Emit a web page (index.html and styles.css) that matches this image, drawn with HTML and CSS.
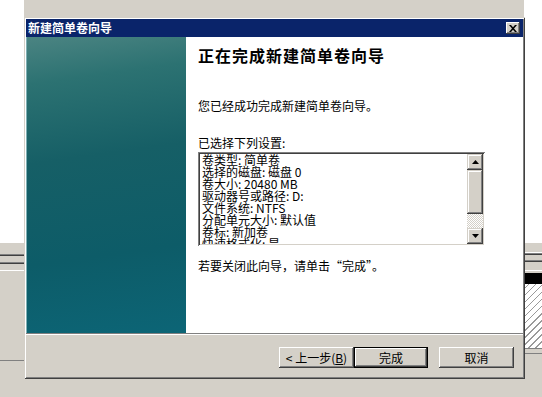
FILE: index.html
```html
<!DOCTYPE html>
<html lang="zh-CN">
<head>
    <meta charset="UTF-8">
    <title>新建简单卷向导</title>
    <link rel="stylesheet" href="styles.css">
</head>
<body>
    <div class="desktop">
        <!-- window behind the wizard -->
        <div class="backdrop">
            <div class="strip">
                <div class="s-white"></div>
                <div class="s-gray h11"></div>
                <div class="s-mid"></div>
                <div class="s-dark"></div>
                <div class="s-gray h6"></div>
                <div class="s-mid"></div>
                <div class="s-dark"></div>
                <div class="s-gray h6"></div>
                <div class="s-light"></div>
                <div class="s-gray h89"></div>
                <div class="s-mid"></div>
                <div class="s-gray fill"></div>
            </div>
            <div class="strip middle"></div>
            <div class="strip">
                <div class="s-white"></div>
                <div class="s-gray h9"></div>
                <div class="s-light"></div>
                <div class="s-mid"></div>
                <div class="s-dark"></div>
                <div class="s-gray h5"></div>
                <div class="s-mid"></div>
                <div class="s-dark"></div>
                <div class="s-gray h8"></div>
                <div class="s-light"></div>
                <div class="s-gray h2"></div>
                <div class="s-black"></div>
                <div class="s-hatch"></div>
                <div class="s-mid"></div>
                <div class="s-gray h4"></div>
                <div class="s-mid"></div>
                <div class="s-gray fill"></div>
            </div>
        </div>

        <div class="dialog">
            <div class="titlebar">
                <span class="title">新建简单卷向导</span>
                <span class="close-btn">
                    <svg width="8" height="7" viewBox="0 0 8 7">
                        <path d="M0 0h2l2 2.2L6 0h2L5 3.5 8 7H6L4 4.8 2 7H0l3-3.5z" fill="#000"/>
                    </svg>
                </span>
            </div>
            <div class="body">
                <div class="banner"></div>
                <div class="content">
                    <h1>正在完成新建简单卷向导</h1>
                    <p class="done">您已经成功完成新建简单卷向导。</p>
                    <p class="label">已选择下列设置:</p>
                    <div class="listbox">
                        <div class="list-text">
                            <div>卷类型: 简单卷</div>
                            <div>选择的磁盘: 磁盘 0</div>
                            <div>卷大小: 20480 MB</div>
                            <div>驱动器号或路径: D:</div>
                            <div>文件系统: NTFS</div>
                            <div>分配单元大小: 默认值</div>
                            <div>卷标: 新加卷</div>
                            <div>快速格式化: 是</div>
                        </div>
                        <div class="scrollbar">
                            <div class="sb-btn">
                                <svg width="7" height="4" viewBox="0 0 7 4"><path d="M3.5 0L7 4H0z" fill="#000"/></svg>
                            </div>
                            <div class="sb-thumb"></div>
                            <div class="sb-track"></div>
                            <div class="sb-btn">
                                <svg width="7" height="4" viewBox="0 0 7 4"><path d="M0 0h7L3.5 4z" fill="#000"/></svg>
                            </div>
                        </div>
                    </div>
                    <p class="hint">若要关闭此向导，请单击“完成”。</p>
                </div>
            </div>
            <div class="footer">
                <button class="btn">&lt; 上一步(<u>B</u>)</button>
                <button class="btn default">完成</button>
                <button class="btn cancel">取消</button>
            </div>
        </div>
    </div>
</body>
</html>
```

FILE: styles.css
```css
body {
    margin: 0;
    background-color: #fff;
    font-family: "Noto Sans CJK SC", "Liberation Sans", sans-serif;
    font-size: 12px;
    color: #000;
}
.desktop {
    position: relative;
    width: 542px;
    height: 397px;
    overflow: hidden;
}

/* background window */
.backdrop {
    display: grid;
    grid-template-columns: 24px 1fr 18px;
    height: 397px;
}
.strip {
    display: flex;
    flex-direction: column;
}
.strip.middle {
    background-color: #d4d0c8;
}
.s-white { height: 243px; background-color: #fff; }
.s-gray { background-color: #d4d0c8; }
.s-gray.h2 { height: 2px; }
.s-gray.h4 { height: 4px; }
.s-gray.h5 { height: 5px; }
.s-gray.h6 { height: 6px; }
.s-gray.h8 { height: 8px; }
.s-gray.h9 { height: 9px; }
.s-gray.h11 { height: 11px; }
.s-gray.h89 { height: 89px; }
.s-gray.fill { flex: 1; }
.s-mid { height: 1px; background-color: #808080; }
.s-dark { height: 1px; background-color: #404040; }
.s-light { height: 1px; background-color: #fff; }
.s-black { height: 11px; background-color: #000; }
.s-hatch {
    height: 64px;
    background: #fff repeating-linear-gradient(-45deg, #fff 0 4px, #9a9a9a 4px 5px);
}

/* wizard dialog */
.dialog {
    position: absolute;
    left: 24px;
    top: 17px;
    width: 501px;
    height: 362px;
    box-sizing: border-box;
    padding: 2px;
    display: flex;
    flex-direction: column;
    background-color: #d4d0c8;
    box-shadow: inset 1px 1px #d4d0c8, inset -1px -1px #404040, inset 2px 2px #fff, inset -2px -2px #808080;
}
.titlebar {
    height: 18px;
    display: flex;
    align-items: center;
    justify-content: space-between;
    background-color: #0a246a;
    padding-left: 2px;
}
.title {
    color: #fff;
    font-weight: bold;
    font-size: 12px;
    line-height: 18px;
}
.close-btn {
    width: 14px;
    height: 12px;
    margin-right: 3px;
    display: flex;
    align-items: center;
    justify-content: center;
    background-color: #d4d0c8;
    box-shadow: inset -1px -1px #404040, inset 1px 1px #fff, inset -2px -2px #808080;
}
.body {
    display: flex;
    height: 296px;
}
.banner {
    width: 159px;
    border-left: 1px solid #7fb0b4;
    background: linear-gradient(172deg, #4b8482 0%, #2c7272 15%, #165f66 40%, #0d5c68 72%, #0c6576 100%);
}
.content {
    flex: 1;
    background-color: #fff;
    padding: 8px 0 0 12px;
}
h1 {
    margin: 0;
    font-size: 16px;
    line-height: 20px;
    letter-spacing: 1px;
    font-weight: bold;
}
.content p {
    margin: 0;
    line-height: 14px;
}
.done {
    margin-top: 34px !important;
}
.label {
    margin-top: 23px !important;
}
.hint {
    margin-top: 13px !important;
}
.listbox {
    margin-top: 2px;
    width: 287px;
    height: 94px;
    box-sizing: border-box;
    padding: 2px;
    display: flex;
    box-shadow: inset 1px 1px #808080, inset -1px -1px #fff, inset 2px 2px #404040, inset -2px -2px #d4d0c8;
}
.list-text {
    flex: 1;
    overflow: hidden;
    padding-left: 2px;
    line-height: 12px;
    white-space: nowrap;
}
.scrollbar {
    width: 16px;
    display: flex;
    flex-direction: column;
}
.sb-btn {
    height: 16px;
    display: flex;
    align-items: center;
    justify-content: center;
    background-color: #d4d0c8;
    box-shadow: inset -1px -1px #404040, inset 1px 1px #d4d0c8, inset -2px -2px #808080, inset 2px 2px #fff;
}
.sb-thumb {
    height: 44px;
    background-color: #d4d0c8;
    box-shadow: inset -1px -1px #404040, inset 1px 1px #d4d0c8, inset -2px -2px #808080, inset 2px 2px #fff;
}
.sb-track {
    height: 14px;
    background: repeating-conic-gradient(#d4d0c8 0 25%, #fff 0 50%) 0 0 / 2px 2px;
}

.footer {
    flex: 1;
    display: flex;
    justify-content: flex-end;
    align-items: flex-start;
    border-top: 1px solid #808080;
    box-shadow: inset 0 1px #fff;
    padding: 13px 9px 0 0;
}
.btn {
    width: 75px;
    height: 21px;
    padding: 0;
    border: none;
    background-color: #d4d0c8;
    font-family: "Noto Sans CJK SC", "Liberation Sans", sans-serif;
    font-size: 12px;
    line-height: 19px;
    color: #000;
    box-shadow: inset -1px -1px #404040, inset 1px 1px #fff, inset -2px -2px #808080, inset 2px 2px #d4d0c8;
}
.btn.default {
    width: 74px;
    box-shadow: inset 0 0 0 1px #000, inset -2px -2px #404040, inset 2px 2px #fff, inset -3px -3px #808080;
}
.btn.cancel {
    margin-left: 11px;
}
```
